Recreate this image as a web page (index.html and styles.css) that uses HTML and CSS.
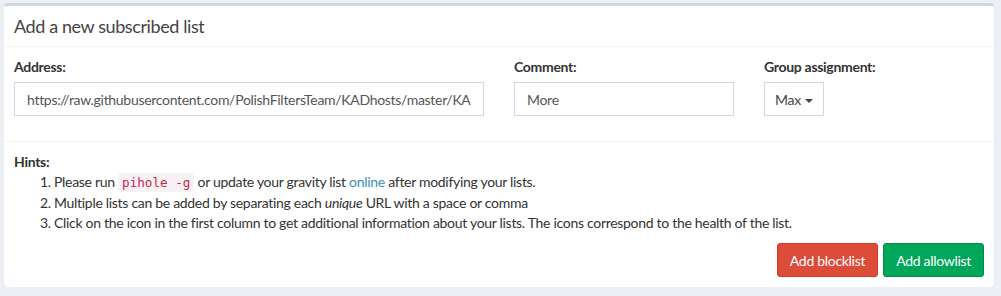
FILE: index.html
```html
<!DOCTYPE html>
<html lang="en">
<head>
  <meta charset="UTF-8">
  <title>Adlists</title>
  <link rel="stylesheet" href="styles.css">
</head>
<body>
  <div class="box">
    <div class="box-header">
      <h3>Add a new subscribed list</h3>
    </div>

    <div class="box-body">
      <div class="row">
        <div class="form-group col-6">
          <label for="new_address">Address:</label>
          <input id="new_address" class="form-control" type="text" value="https://raw.githubusercontent.com/PolishFiltersTeam/KADhosts/master/KADhosts.txt">
        </div>
        <div class="form-group col-3">
          <label for="new_comment">Comment:</label>
          <input id="new_comment" class="form-control" type="text" value="More">
        </div>
        <div class="form-group col-3">
          <label>Group assignment:</label>
          <button class="btn btn-default dropdown">Max <span class="caret"></span></button>
        </div>
      </div>
    </div>

    <div class="box-footer">
      <strong>Hints:</strong>
      <ol>
        <li>Please run <code>pihole -g</code> or update your gravity list <a href="#">online</a> after modifying your lists.</li>
        <li>Multiple lists can be added by separating each <i>unique</i> URL with a space or comma</li>
        <li>Click on the icon in the first column to get additional information about your lists. The icons correspond to the health of the list.</li>
      </ol>
      <div class="actions">
        <button class="btn btn-danger">Add blocklist</button>
        <button class="btn btn-success">Add allowlist</button>
      </div>
    </div>
  </div>
</body>
</html>
```

FILE: styles.css
```css
body {
  font-family: Lato, "Noto Sans", sans-serif;
  font-size: 14px;
  line-height: 20px;
  letter-spacing: -0.3px;
  color: #333;
  background-color: #ecf0f5;
  margin: 0;
  padding: 3px 7px 0 4px;
}

.box {
  background: white;
  border-top: 3px solid #d2d6de;
  border-radius: 4px;
  box-shadow: 0 1px 1px rgba(0,0,0,0.1);
}

.box-header {
  padding: 10px;
  border-bottom: 1px solid #f4f4f4;
}

.box-header h3 {
  margin: 0;
  font-size: 18px;
  font-weight: normal;
  line-height: 20px;
  letter-spacing: -0.4px;
  color: #444;
}

.box-body {
  padding: 10px;
}

.row {
  display: flex;
  margin: 0 -15px;
}

.col-6 {
  width: 50%;
}

.col-3 {
  width: 25%;
}

.form-group {
  box-sizing: border-box;
  padding: 0 15px;
  margin-bottom: 15px;
}

label {
  display: block;
  font-weight: bold;
  margin-bottom: 5px;
}

.form-control {
  display: block;
  box-sizing: border-box;
  width: 100%;
  height: 34px;
  padding: 6px 12px;
  font-family: inherit;
  font-size: 14px;
  letter-spacing: inherit;
  color: #555;
  border: 1px solid #d2d6de;
  border-radius: 0;
  background: white;
}

.btn {
  height: 34px;
  padding: 6px 12px;
  font-family: inherit;
  font-size: 14px;
  letter-spacing: inherit;
  border: 1px solid transparent;
  border-radius: 3px;
  cursor: pointer;
}

.btn-default {
  padding: 6px 10px;
  background-color: white;
  color: #444;
  border-color: #d2d6de;
  border-radius: 0;
}

.caret {
  display: inline-block;
  width: 0;
  height: 0;
  margin-left: 1px;
  vertical-align: middle;
  border-top: 4px solid #444;
  border-left: 4px solid transparent;
  border-right: 4px solid transparent;
}

.box-footer {
  padding: 10px;
  border-top: 1px solid #f4f4f4;
}

ol {
  margin: 0 0 10px;
  padding-left: 40px;
}

code {
  font-family: "DejaVu Sans Mono", monospace;
  font-size: 90%;
  letter-spacing: 0;
  padding: 2px 4px;
  color: #c7254e;
  background-color: #f9f2f4;
  border-radius: 4px;
}

a {
  color: #3c8dbc;
  text-decoration: none;
}

.actions {
  display: flex;
  justify-content: flex-end;
  gap: 5px;
}

.btn-danger {
  background-color: #dd4b39;
  border-color: #d73925;
  color: white;
}

.btn-success {
  background-color: #00a65a;
  border-color: #008d4c;
  color: white;
}
```
